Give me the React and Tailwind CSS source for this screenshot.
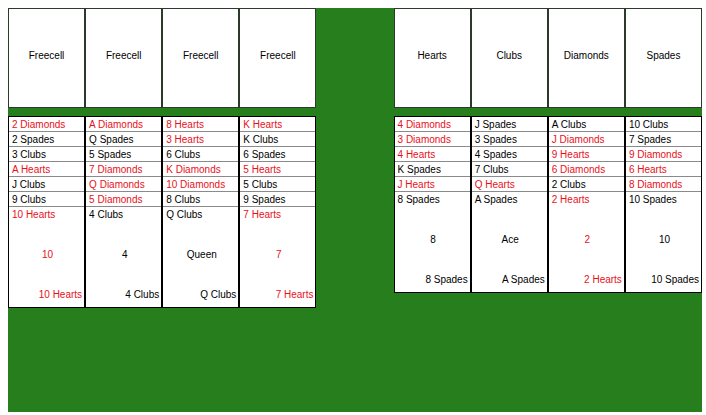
const tableau = [
  ['2 Diamonds', '2 Spades', '3 Clubs', 'A Hearts', 'J Clubs', '9 Clubs', '10 Hearts'],
  ['A Diamonds', 'Q Spades', '5 Spades', '7 Diamonds', 'Q Diamonds', '5 Diamonds', '4 Clubs'],
  ['8 Hearts', '3 Hearts', '6 Clubs', 'K Diamonds', '10 Diamonds', '8 Clubs', 'Q Clubs'],
  ['K Hearts', 'K Clubs', '6 Spades', '5 Hearts', '5 Clubs', '9 Spades', '7 Hearts'],
  null,
  ['4 Diamonds', '3 Diamonds', '4 Hearts', 'K Spades', 'J Hearts', '8 Spades'],
  ['J Spades', '3 Spades', '4 Spades', '7 Clubs', 'Q Hearts', 'A Spades'],
  ['A Clubs', 'J Diamonds', '9 Hearts', '6 Diamonds', '2 Clubs', '2 Hearts'],
  ['10 Clubs', '7 Spades', '9 Diamonds', '6 Hearts', '8 Diamonds', '10 Spades'],
];

const topRow = ['Freecell', 'Freecell', 'Freecell', 'Freecell', null, 'Hearts', 'Clubs', 'Diamonds', 'Spades'];

const rankNames = { A: 'Ace', K: 'King', Q: 'Queen', J: 'Jack' };

const isRed = (card) => card.includes('Hearts') || card.includes('Diamonds');

const color = (card) => (isRed(card) ? 'text-[#e8101a]' : 'text-black');

const FullCard = ({ card }) => {
  const rank = card.split(' ')[0];
  return (
    <div className={`h-[100px] flex flex-col ${color(card)}`}>
      <div className="h-[15px] leading-[16px] px-[3px]">{card}</div>
      <div className="flex-1 flex items-center justify-center pl-[2px]">{rankNames[rank] || rank}</div>
      <div className="h-[15px] leading-[15px] text-right pr-[2px] mb-[5px]">{card}</div>
    </div>
  );
};

export default function App() {
  return (
    <div className="ml-2 mt-2 w-[694px] h-[404px] bg-[#267e1c] text-[10px]" style={{ fontFamily: '"Liberation Sans", Arial, sans-serif' }}>
      <div className="grid grid-cols-9 gap-y-2">
        {/* Freecells and foundations */}
        {topRow.map((label, i) =>
          label ? (
            <div key={i} className="h-[100px] bg-white border border-[#2c3a2c] flex flex-col">
              <div className="h-[15px]" />
              <div className="flex-1 flex items-center justify-center text-black">{label}</div>
              <div className="h-[15px] mb-[5px]" />
            </div>
          ) : (
            <div key={i} />
          )
        )}

        {/* Tableau */}
        {tableau.map((col, i) =>
          col ? (
            <div key={'t' + i} className="self-start bg-white border border-black">
              {col.slice(0, -1).map((card, j) => (
                <div key={j} className={`h-[15px] leading-[16px] px-[3px] border-b border-[#8a8a8a] ${color(card)}`}>
                  {card}
                </div>
              ))}
              <FullCard card={col[col.length - 1]} />
            </div>
          ) : (
            <div key={'t' + i} />
          )
        )}
      </div>
    </div>
  );
}
